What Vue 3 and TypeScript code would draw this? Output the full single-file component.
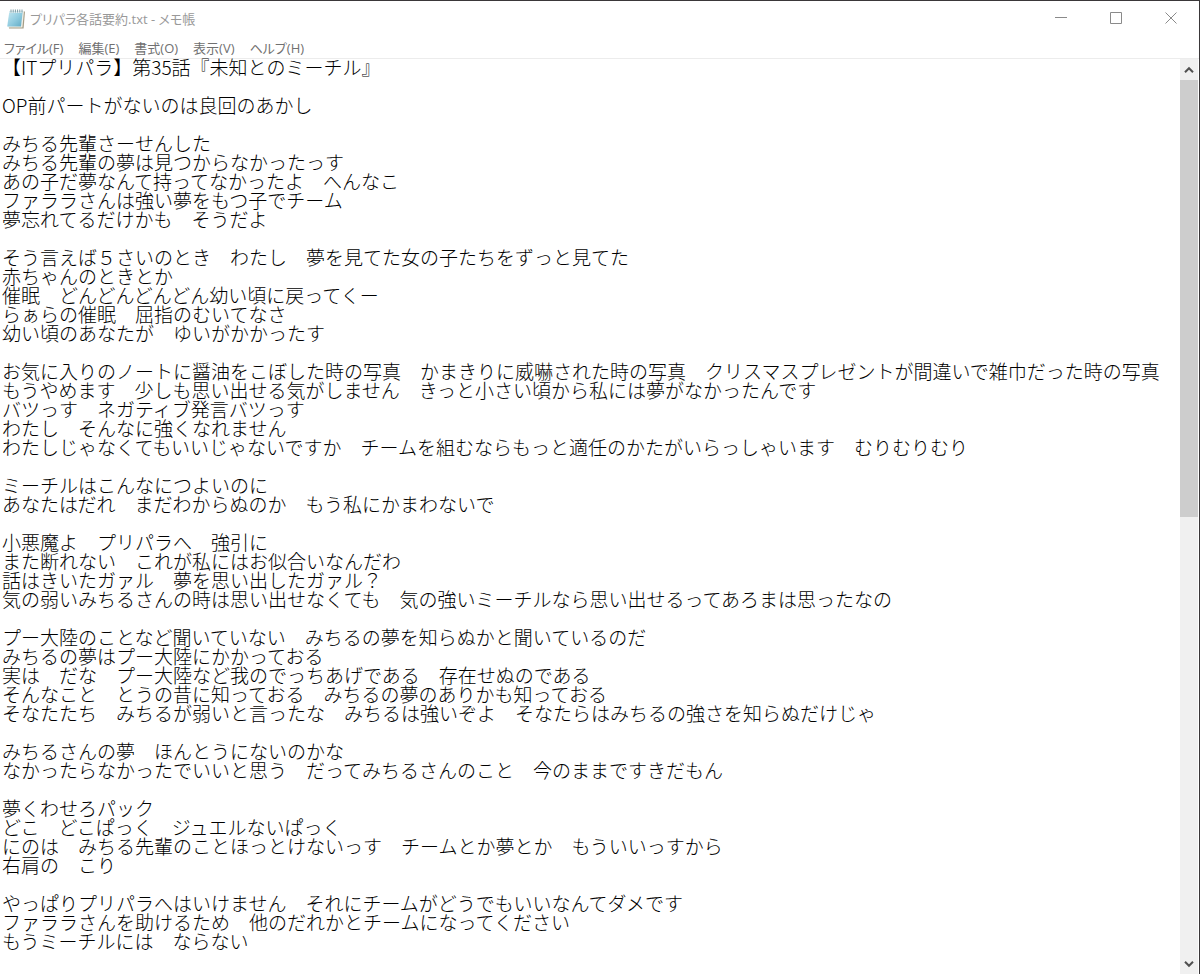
<script setup lang="ts">
import { ref } from 'vue'

const fileName = 'プリパラ各話要約.txt'
const menus: string[] = ['ファイル(F)', '編集(E)', '書式(O)', '表示(V)', 'ヘルプ(H)']

const content = ref<string>(`【ITプリパラ】第35話『未知とのミーチル』

OP前パートがないのは良回のあかし

みちる先輩さーせんした
みちる先輩の夢は見つからなかったっす
あの子だ夢なんて持ってなかったよ　へんなこ
ファララさんは強い夢をもつ子でチーム
夢忘れてるだけかも　そうだよ

そう言えば５さいのとき　わたし　夢を見てた女の子たちをずっと見てた
赤ちゃんのときとか
催眠　どんどんどんどん幼い頃に戻ってくー
らぁらの催眠　屈指のむいてなさ
幼い頃のあなたが　ゆいがかかったす

お気に入りのノートに醤油をこぼした時の写真　かまきりに威嚇された時の写真　クリスマスプレゼントが間違いで雑巾だった時の写真
もうやめます　少しも思い出せる気がしません　きっと小さい頃から私には夢がなかったんです
バツっす　ネガティブ発言バツっす
わたし　そんなに強くなれません
わたしじゃなくてもいいじゃないですか　チームを組むならもっと適任のかたがいらっしゃいます　むりむりむり

ミーチルはこんなにつよいのに
あなたはだれ　まだわからぬのか　もう私にかまわないで

小悪魔よ　プリパラへ　強引に
また断れない　これが私にはお似合いなんだわ
話はきいたガァル　夢を思い出したガァル？
気の弱いみちるさんの時は思い出せなくても　気の強いミーチルなら思い出せるってあろまは思ったなの

プー大陸のことなど聞いていない　みちるの夢を知らぬかと聞いているのだ
みちるの夢はプー大陸にかかっておる
実は　だな　プー大陸など我のでっちあげである　存在せぬのである
そんなこと　とうの昔に知っておる　みちるの夢のありかも知っておる
そなたたち　みちるが弱いと言ったな　みちるは強いぞよ　そなたらはみちるの強さを知らぬだけじゃ

みちるさんの夢　ほんとうにないのかな
なかったらなかったでいいと思う　だってみちるさんのこと　今のままですきだもん

夢くわせろパック
どこ　どこぱっく　ジュエルないぱっく
にのは　みちる先輩のことほっとけないっす　チームとか夢とか　もういいっすから
右肩の　こり

やっぱりプリパラへはいけません　それにチームがどうでもいいなんてダメです
ファララさんを助けるため　他のだれかとチームになってください
もうミーチルには　ならない`)
</script>

<template>
  <div class="window">
    <header class="titlebar">
      <svg class="app-icon" width="20" height="22" viewBox="0 0 20 22" aria-hidden="true">
        <defs>
          <linearGradient id="cover" x1="0" y1="0" x2="1" y2="1">
            <stop offset="0" stop-color="#c6e8f2" />
            <stop offset="0.55" stop-color="#8fcbdf" />
            <stop offset="1" stop-color="#5fa9c4" />
          </linearGradient>
        </defs>
        <path d="M4 3.5H19L17.6 20.5H3z" fill="#a39c86" />
        <path d="M3.6 3H18L16.4 19.5H2z" fill="#f1efe6" />
        <path d="M3.4 3H16.8L15 18.5H1.2z" fill="url(#cover)" />
        <path d="M3.4 3H16.8L16.6 5H3.1z" fill="#dceff4" />
        <path d="M5 1.5v3M7.2 1.5v3M9.4 1.5v3M11.6 1.5v3M13.8 1.5v3M16 1.5v3" stroke="#7b9aa3" stroke-width="1" />
      </svg>
      <h1 class="title">{{ fileName }} - メモ帳</h1>
      <div class="controls">
        <button type="button" aria-label="最小化">
          <svg width="12" height="12" viewBox="0 0 12 12"><path d="M0 5.5H12" /></svg>
        </button>
        <button type="button" aria-label="最大化">
          <svg width="12" height="12" viewBox="0 0 12 12"><path d="M.5 .5H11.5V11.5H.5z" /></svg>
        </button>
        <button type="button" aria-label="閉じる">
          <svg width="12" height="12" viewBox="0 0 12 12"><path d="M.5 .5L11.5 11.5M11.5 .5L.5 11.5" /></svg>
        </button>
      </div>
    </header>
    <nav class="menubar" aria-label="メニュー">
      <button v-for="menu in menus" :key="menu" type="button">{{ menu }}</button>
    </nav>
    <main class="body">
      <textarea v-model="content" class="editor" aria-label="本文" spellcheck="false" wrap="off"></textarea>
      <div class="scrollbar">
        <button type="button" aria-label="上へスクロール">
          <svg width="10" height="8" viewBox="0 0 10 8"><path d="M1 6.2L5 2.2L9 6.2" /></svg>
        </button>
        <div class="track"><div class="thumb"></div></div>
        <button type="button" aria-label="下へスクロール">
          <svg width="10" height="8" viewBox="0 0 10 8"><path d="M1 1.8L5 5.8L9 1.8" /></svg>
        </button>
      </div>
    </main>
  </div>
</template>

<style>
body {
  margin: 0;
}
</style>

<style scoped>
.window {
  box-sizing: border-box;
  display: flex;
  flex-direction: column;
  height: 100vh;
  border-top: 1px solid #3a3739;
  border-right: 1px solid #3a3739;
  background: #fff;
  font-family: "Open Sans", "Noto Sans CJK JP", sans-serif;
}

button {
  display: flex;
  align-items: center;
  justify-content: center;
  margin: 0;
  padding: 0;
  border: 0;
  background: none;
  font: inherit;
  color: inherit;
}

.titlebar {
  display: flex;
  align-items: center;
  height: 36px;
  padding-left: 6px;
}

.app-icon {
  flex: none;
}

.title {
  flex: 1;
  margin: 0;
  padding-left: 4px;
  font-size: 13px;
  font-weight: 400;
  font-feature-settings: "palt";
  line-height: 20px;
  color: #999;
}

.controls {
  display: flex;
  align-self: stretch;
  padding: 0 1px 2px 0;
}

.controls button {
  width: 55px;
}

.controls path {
  fill: none;
  stroke: #8a8a8a;
  stroke-width: 1;
}

.menubar {
  display: flex;
  gap: 15px;
  height: 21px;
  padding-left: 4px;
  border-bottom: 1px solid #ececec;
  font-size: 13px;
  font-weight: 400;
  font-feature-settings: "palt";
  line-height: 20px;
  color: #707070;
}

.body {
  display: flex;
  flex: 1;
  min-height: 0;
}

.editor {
  flex: 1;
  min-width: 0;
  margin: -2px 0 0;
  padding: 0 0 0 2px;
  border: 0;
  outline: 0;
  overflow: hidden;
  resize: none;
  background: transparent;
  font-family: "Noto Sans CJK JP", sans-serif;
  font-size: 19px;
  font-weight: 300;
  line-height: 19px;
  white-space: pre;
  color: #000;
}

.scrollbar {
  display: flex;
  flex-direction: column;
  width: 18px;
  margin-right: 1px;
  background: #f0f0f0;
}

.scrollbar button {
  height: 21px;
}

.scrollbar path {
  fill: none;
  stroke: #505050;
  stroke-width: 2;
}

.track {
  flex: 1;
}

.thumb {
  height: 50%;
  background: #cdcdcd;
}
</style>
